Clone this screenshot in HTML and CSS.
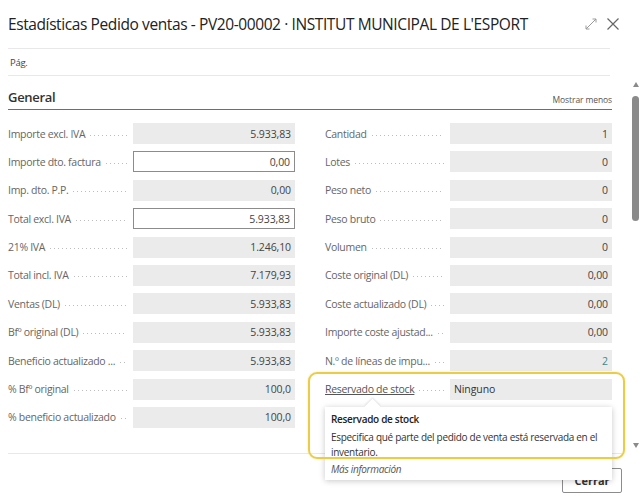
FILE: index.html
```html
<!DOCTYPE html>
<html lang="es">
<head>
  <meta charset="UTF-8">
  <title>Estadísticas Pedido ventas</title>
  <link rel="stylesheet" href="styles.css">
</head>
<body>
  <div class="dialog">
    <header class="title-bar">
      <h1>Estadísticas Pedido ventas - PV20-00002 · INSTITUT MUNICIPAL DE L'ESPORT</h1>
      <div class="title-actions">
        <svg class="icon-expand" width="14" height="14" viewBox="0 0 14 14">
          <path d="M2 12 L12 2 M2 12 L2 8.5 M2 12 L5.5 12 M12 2 L8.5 2 M12 2 L12 5.5" fill="none" stroke="#9a9a9a" stroke-width="1"/>
        </svg>
        <svg class="icon-close" width="14" height="14" viewBox="0 0 14 14">
          <path d="M1.5 1.5 L12.5 12.5 M12.5 1.5 L1.5 12.5" fill="none" stroke="#666" stroke-width="1.2"/>
        </svg>
      </div>
    </header>

    <nav class="tabs"><span>Pág.</span></nav>

    <div class="body">
      <main class="content">
        <div class="section-head">
          <h2>General</h2>
          <a href="#" class="more">Mostrar menos</a>
        </div>

        <div class="fields">
          <div class="col">
            <div class="field"><span class="label"><span>Importe excl. IVA</span><i></i></span><span class="value">5.933,83</span></div>
            <div class="field"><span class="label"><span>Importe dto. factura</span><i></i></span><span class="value edit">0,00</span></div>
            <div class="field"><span class="label"><span>Imp. dto. P.P.</span><i></i></span><span class="value">0,00</span></div>
            <div class="field"><span class="label"><span>Total excl. IVA</span><i></i></span><span class="value edit">5.933,83</span></div>
            <div class="field"><span class="label"><span>21% IVA</span><i></i></span><span class="value">1.246,10</span></div>
            <div class="field"><span class="label"><span>Total incl. IVA</span><i></i></span><span class="value">7.179,93</span></div>
            <div class="field"><span class="label"><span>Ventas (DL)</span><i></i></span><span class="value">5.933,83</span></div>
            <div class="field"><span class="label"><span>Bfº original (DL)</span><i></i></span><span class="value">5.933,83</span></div>
            <div class="field"><span class="label"><span>Beneficio actualizado ...</span><i></i></span><span class="value">5.933,83</span></div>
            <div class="field"><span class="label"><span>% Bfº original</span><i></i></span><span class="value">100,0</span></div>
            <div class="field"><span class="label"><span>% beneficio actualizado</span><i></i></span><span class="value">100,0</span></div>
          </div>
          <div class="col">
            <div class="field"><span class="label"><span>Cantidad</span><i></i></span><span class="value">1</span></div>
            <div class="field"><span class="label"><span>Lotes</span><i></i></span><span class="value">0</span></div>
            <div class="field"><span class="label"><span>Peso neto</span><i></i></span><span class="value">0</span></div>
            <div class="field"><span class="label"><span>Peso bruto</span><i></i></span><span class="value">0</span></div>
            <div class="field"><span class="label"><span>Volumen</span><i></i></span><span class="value">0</span></div>
            <div class="field"><span class="label"><span>Coste original (DL)</span><i></i></span><span class="value">0,00</span></div>
            <div class="field"><span class="label"><span>Coste actualizado (DL)</span><i></i></span><span class="value">0,00</span></div>
            <div class="field"><span class="label"><span>Importe coste ajustad...</span><i></i></span><span class="value">0,00</span></div>
            <div class="field"><span class="label"><span>N.º de líneas de impu...</span><i></i></span><span class="value link">2</span></div>
            <div class="field"><span class="label"><span class="underline">Reservado de stock</span><i></i></span><span class="value text">Ninguno</span></div>
          </div>
        </div>
      </main>

      <div class="scrollbar">
        <span class="arrow up"></span>
        <span class="thumb"></span>
        <span class="arrow down"></span>
      </div>
    </div>

    <footer class="footer">
      <button type="button">Cerrar</button>
    </footer>
  </div>

  <!-- resaltado y tooltip sobre el campo -->
  <div class="highlight"></div>
  <div class="tooltip">
    <strong>Reservado de stock</strong>
    <p>Especifica qué parte del pedido de venta está reservada en el<br>inventario.</p>
    <em>Más información</em>
  </div>
</body>
</html>
```

FILE: styles.css
```css
body {
  margin: 0;
  font-family: 'Open Sans', 'Noto Sans', sans-serif;
  letter-spacing: -0.3px;
  background: #fff;
  color: #333;
  width: 641px;
  height: 499px;
  overflow: hidden;
  position: relative;
}

.dialog {
  width: 641px;
}

.title-bar {
  display: flex;
  align-items: center;
  height: 48px;
  padding: 0 21px 0 8px;
}

h1 {
  flex: 1;
  margin: 0;
  font-size: 15.5px;
  font-weight: normal;
  letter-spacing: -0.4px;
  color: #222;
  white-space: nowrap;
}

.title-actions {
  display: flex;
  gap: 8px;
  align-items: center;
}

.tabs {
  margin: 0 31px 0 8px;
  height: 26px;
  border-top: 1px solid #e8e8e8;
  border-bottom: 1px solid #e8e8e8;
  display: flex;
  align-items: center;
  font-size: 9.5px;
  color: #444;
  padding-left: 2px;
}

.body {
  display: flex;
  height: 377px;
}

.content {
  margin-left: 8px;
  width: 604px;
}

.section-head {
  display: flex;
  justify-content: space-between;
  align-items: flex-end;
  height: 33px;
  border-bottom: 1px solid #6e6e6e;
}

h2 {
  margin: 0 0 3px;
  font-size: 13px;
  font-weight: 600;
  color: #333;
}

.more {
  font-size: 8.5px;
  letter-spacing: -0.1px;
  color: #555;
  text-decoration: none;
  margin-bottom: 4px;
}

.fields {
  display: grid;
  grid-template-columns: 287px 287px;
  column-gap: 30px;
  margin-top: 13px;
}

.field {
  display: flex;
  height: 21px;
  margin-bottom: 7.4px;
  font-size: 10.5px;
}

.label {
  width: 125px;
  display: flex;
  align-items: center;
  color: #666;
  white-space: nowrap;
}

.label i {
  flex: 1;
  height: 1px;
  margin: 3px 6px 0 5px;
  background: linear-gradient(to right, #bdbdbd 1px, transparent 1px) repeat-x left / 4px 1px;
}

.underline {
  text-decoration: underline;
  color: #555;
}

.value {
  width: 162px;
  box-sizing: border-box;
  background: #ebebeb;
  display: flex;
  align-items: center;
  justify-content: flex-end;
  padding: 0 4px;
  color: #444;
  letter-spacing: -0.1px;
}

.value.edit {
  background: #fff;
  border: 1px solid #8c8c8c;
}

.value.link {
  color: #3a8c8c;
}

.value.text {
  justify-content: flex-start;
  color: #333;
}

.scrollbar {
  margin-left: auto;
  width: 11px;
  display: flex;
  flex-direction: column;
  align-items: center;
  padding-top: 6px;
}

.arrow {
  width: 0;
  height: 0;
  border-left: 3.5px solid transparent;
  border-right: 3.5px solid transparent;
}

.arrow.up {
  border-bottom: 5px solid #8a8a8a;
}

.arrow.down {
  border-top: 5px solid #8a8a8a;
  margin-top: 222px;
}

.thumb {
  width: 7px;
  height: 125px;
  margin-top: 9px;
  border-radius: 4px;
  background: #8a8a8a;
}

.footer {
  margin: 0 19px 0 8px;
  border-top: 1px solid #e8e8e8;
  display: flex;
  justify-content: flex-end;
  padding-top: 14px;
}

button {
  width: 60px;
  height: 25px;
  background: #fff;
  border: 1px solid #8c8c8c;
  border-radius: 2px;
  font-family: inherit;
  font-size: 11px;
  font-weight: bold;
  color: #333;
}

.highlight {
  position: absolute;
  left: 308px;
  top: 372px;
  width: 313px;
  height: 83px;
  border: 2px solid #ebcd45;
  border-radius: 9px;
  box-shadow: 0 0 2px rgba(235, 205, 69, 0.6);
  z-index: 2;
}

.tooltip {
  position: absolute;
  left: 325px;
  top: 407px;
  width: 287px;
  box-sizing: border-box;
  padding: 5px 6px 3px;
  background: #fff;
  box-shadow: 0 1px 6px rgba(0, 0, 0, 0.22);
  font-size: 10px;
  color: #333;
  z-index: 1;
}

.tooltip::before {
  content: "";
  position: absolute;
  left: 42px;
  top: -6px;
  width: 11px;
  height: 11px;
  background: #fff;
  transform: rotate(45deg);
  box-shadow: -1px -1px 2px rgba(0, 0, 0, 0.1);
}

.tooltip strong {
  display: block;
  position: relative;
  font-weight: 600;
  font-size: 10px;
  color: #222;
  line-height: 14px;
}

.tooltip p {
  margin: 4px 0 2px;
  line-height: 15px;
}

.tooltip em {
  display: block;
  color: #555;
  line-height: 15px;
}
```
